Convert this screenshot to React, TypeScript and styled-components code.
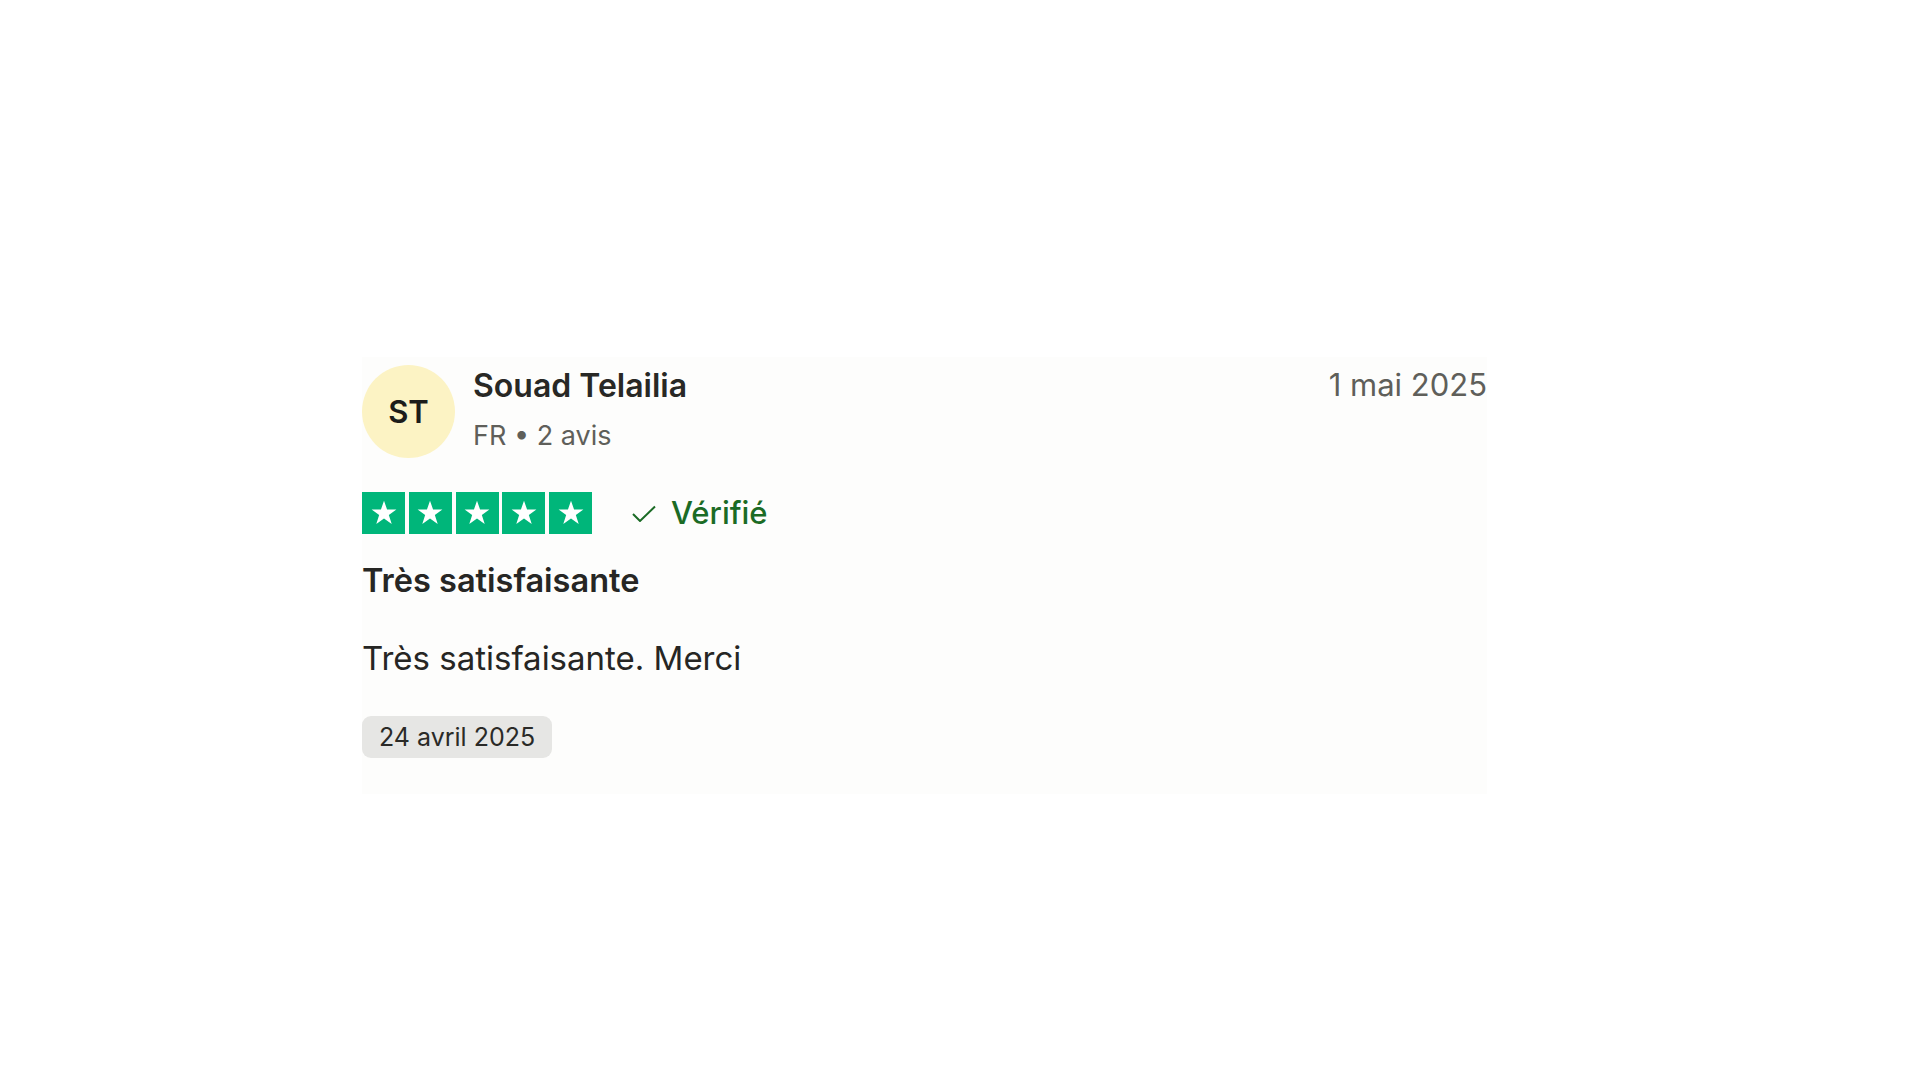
import React from 'react';
import styled, { createGlobalStyle } from 'styled-components';

const GlobalStyle = createGlobalStyle`
  html, body {
    margin: 0;
    padding: 0;
    background: #ffffff;
  }
  body {
    font-family: Inter, "Noto Sans", "Liberation Sans", sans-serif;
    color: #1f1f1d;
  }
`;

const Page = styled.div`
  width: 1920px;
  height: 1080px;
  box-sizing: border-box;
  padding: 357px 0 0 362px;
`;

const Card = styled.article`
  width: 1125px;
  box-sizing: border-box;
  background: #fdfdfc;
  padding: 8px 0 36px;
  display: flex;
  flex-direction: column;
`;

const Header = styled.header`
  display: flex;
  align-items: flex-start;
`;

const Avatar = styled.div`
  width: 93px;
  height: 93px;
  border-radius: 50%;
  background: #fcf3c4;
  display: flex;
  align-items: center;
  justify-content: center;
  font-size: 31px;
  font-weight: 600;
  color: #1c1c1a;
  flex-shrink: 0;
`;

const Consumer = styled.div`
  display: flex;
  flex-direction: column;
  margin-left: 18px;
  flex: 1;
`;

const Name = styled.div`
  font-size: 32px;
  font-weight: 600;
  line-height: 36px;
  color: #282825;
  margin-top: 3px;
`;

const Meta = styled.div`
  font-size: 27px;
  line-height: 34px;
  color: #5f5f5a;
  margin-top: 15px;
`;

const PublishedDate = styled.time`
  font-size: 31px;
  line-height: 36px;
  color: #5f5f5a;
  margin-top: 2px;
`;

const RatingRow = styled.div`
  display: flex;
  align-items: center;
  margin-top: 34px;
`;

const Stars = styled.div`
  display: flex;
  gap: 3.75px;
`;

const StarBox = styled.div`
  width: 43px;
  height: 42px;
  background: #00b67a;
  display: flex;
  align-items: center;
  justify-content: center;
`;

const Verified = styled.div`
  display: flex;
  align-items: center;
  margin-left: 40px;
  color: #1b6b25;
  font-size: 31px;
  line-height: 36px;
  font-weight: 500;
  gap: 15px;
`;

const Title = styled.h2`
  margin: 25px 0 0;
  font-size: 32.5px;
  line-height: 44px;
  font-weight: 600;
  color: #262624;
`;

const Body = styled.p`
  margin: 34px 0 0;
  font-size: 33px;
  line-height: 42px;
  font-weight: 400;
  color: #262624;
`;

const ExperienceDate = styled.span`
  align-self: flex-start;
  margin-top: 37px;
  height: 42px;
  box-sizing: border-box;
  padding: 0 17px;
  display: flex;
  align-items: center;
  background: #e6e6e4;
  border-radius: 9px;
  font-size: 25px;
  color: #2a2a27;
`;

const Star = () => (
  <svg width="30" height="30" viewBox="0 0 24 24">
    <path
      d="M12 2.2l2.45 7.05h7.45l-6.03 4.38 2.3 7.07L12 16.32l-6.17 4.38 2.3-7.07L2.1 9.25h7.45z"
      fill="#ffffff"
    />
  </svg>
);

const Check = () => (
  <svg width="24" height="17" viewBox="0 0 24 17">
    <path d="M1 9l7 7L23 1.5" fill="none" stroke="#1b6b25" strokeWidth="2" />
  </svg>
);

export default function App() {
  return (
    <Page>
      <GlobalStyle />
      <Card>
        <Header>
          <Avatar>ST</Avatar>
          <Consumer>
            <Name>Souad Telailia</Name>
            <Meta>FR • 2 avis</Meta>
          </Consumer>
          <PublishedDate>1 mai 2025</PublishedDate>
        </Header>
        <RatingRow>
          <Stars>
            {[0, 1, 2, 3, 4].map(i => (
              <StarBox key={i}>
                <Star />
              </StarBox>
            ))}
          </Stars>
          <Verified>
            <Check />
            Vérifié
          </Verified>
        </RatingRow>
        <Title>Très satisfaisante</Title>
        <Body>Très satisfaisante. Merci</Body>
        <ExperienceDate>24 avril 2025</ExperienceDate>
      </Card>
    </Page>
  );
}
